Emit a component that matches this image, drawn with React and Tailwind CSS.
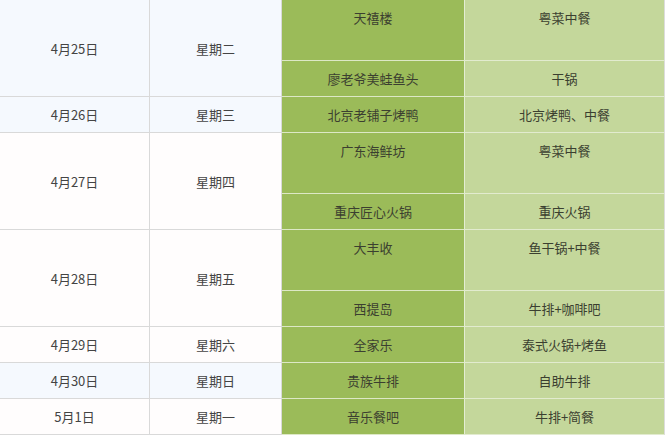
import React from "react";

const rows = [
  { date: "4月25日", day: "星期二", blue: true, items: [["天禧楼", "粤菜中餐"], ["廖老爷美蛙鱼头", "干锅"]] },
  { date: "4月26日", day: "星期三", blue: true, items: [["北京老铺子烤鸭", "北京烤鸭、中餐"]] },
  { date: "4月27日", day: "星期四", blue: false, items: [["广东海鲜坊", "粤菜中餐"], ["重庆匠心火锅", "重庆火锅"]] },
  { date: "4月28日", day: "星期五", blue: false, items: [["大丰收", "鱼干锅+中餐"], ["西提岛", "牛排+咖啡吧"]] },
  { date: "4月29日", day: "星期六", blue: false, items: [["全家乐", "泰式火锅+烤鱼"]] },
  { date: "4月30日", day: "星期日", blue: true, items: [["贵族牛排", "自助牛排"]] },
  { date: "5月1日", day: "星期一", blue: false, items: [["音乐餐吧", "牛排+简餐"]] },
];

export default function App() {
  const cells = [];
  rows.forEach((r, i) => {
    const span = r.items.length === 2 ? "row-span-2" : "";
    const bg = r.blue ? "bg-[#f5f9fe]" : "bg-[#fffdfd]";
    cells.push(
      <div key={`d${i}`} className={`${span} ${bg} flex items-center justify-center border-r border-b border-[#d9d9d9] text-[#444]`}>
        {r.date}
      </div>
    );
    cells.push(
      <div key={`w${i}`} className={`${span} ${bg} flex items-center justify-center border-r border-b border-[#d9d9d9] text-[#444]`}>
        {r.day}
      </div>
    );
    r.items.forEach((it, j) => {
      cells.push(
        <div key={`g${i}-${j}`} className="bg-[#9bbb59] flex justify-center pt-[8px] border-r border-b border-r-[#e4edd4] border-b-[#dde8c6] text-[#3b3f30]">
          {it[0]}
        </div>
      );
      cells.push(
        <div key={`l${i}-${j}`} className="bg-[#c4d79b] flex justify-center pt-[8px] border-r border-b border-r-[#dcdcdc] border-b-[#e2ebcf] text-[#3b3f30]">
          {it[1]}
        </div>
      );
    });
  });

  return (
    <div
      className="w-[666px] h-[436px] bg-white overflow-hidden text-[13px] leading-[19px]"
      style={{ fontFamily: '"Noto Sans CJK SC", "Noto Sans", sans-serif' }}
    >
      <div className="grid grid-cols-[150px_132px_183px_200px] grid-rows-[61px_36px_36px_61px_36px_61px_36px_36px_36px_36px] w-[665px]">
        {cells}
      </div>
    </div>
  );
}
